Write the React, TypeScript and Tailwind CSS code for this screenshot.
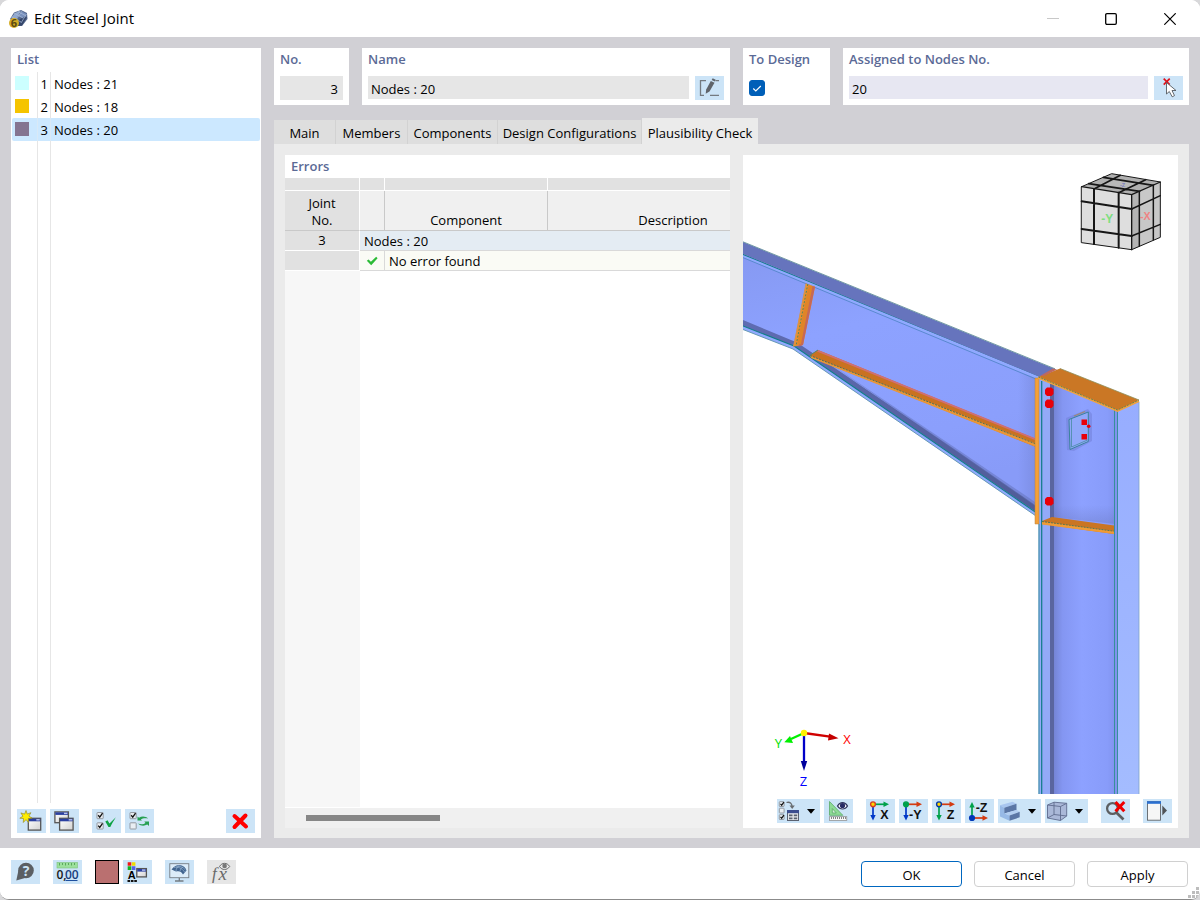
import type { ReactNode } from "react";

type Joint = { no: number; name: string; color: string };

const joints: Joint[] = [
  { no: 1, name: "Nodes : 21", color: "#ccffff" },
  { no: 2, name: "Nodes : 18", color: "#f5c400" },
  { no: 3, name: "Nodes : 20", color: "#847491" },
];

const tabs = [
  { label: "Main", width: "w-[62px]" },
  { label: "Members", width: "w-[72px]" },
  { label: "Components", width: "w-[90px]" },
  { label: "Design Configurations", width: "w-[144px]" },
  { label: "Plausibility Check", width: "w-[116px]" },
];

function ToolButton({
  label,
  children,
  menu = false,
  disabled = false,
}: {
  label: string;
  children: ReactNode;
  menu?: boolean;
  disabled?: boolean;
}) {
  return (
    <button
      type="button"
      aria-label={label}
      disabled={disabled}
      className={`flex h-6 shrink-0 items-center ${menu ? "w-[43px]" : "w-[29px]"} ${
        disabled ? "bg-[#e6e6e6]" : "bg-[#cce4f7] hover:bg-[#b8daf5]"
      }`}
    >
      <svg viewBox={menu ? "0 0 43 24" : "0 0 29 24"} className="h-6 w-full" aria-hidden="true">
        {children}
        {menu && <path d="M30 10h8l-4 4.7z" fill="#000" />}
      </svg>
    </button>
  );
}

function MiniWindow({ x, y, w, h }: { x: number; y: number; w: number; h: number }) {
  return (
    <g>
      <rect x={x + 0.6} y={y + 0.6} width={w - 1.2} height={h - 1.2} fill="url(#paper)" stroke="#555" strokeWidth="1.3" />
      <rect x={x + 1} y={y + 1} width={w - 2} height="2.6" fill="#2a3fa0" />
      <rect x={x + w - 5} y={y + 1.4} width="3.4" height="1.4" fill="#b9c4ee" />
    </g>
  );
}

function CheckSquare({ x, y, on = true, size = 6.2 }: { x: number; y: number; on?: boolean; size?: number }) {
  return (
    <g>
      <rect x={x} y={y} width={size} height={size} rx="0.6" fill="#e9eef3" stroke="#8a9097" strokeWidth="0.9" />
      {on && (
        <path
          d={`M${x + 1.2} ${y + size * 0.45}l${size * 0.25} ${size * 0.3}l${size * 0.45} ${-size * 0.65}`}
          fill="none"
          stroke="#111"
          strokeWidth="1.3"
        />
      )}
    </g>
  );
}

function Panel({ title, children, htmlFor }: { title: string; children: ReactNode; htmlFor: string }) {
  return (
    <section className="h-[57px] bg-white px-1.5 pt-[2px]">
      <label htmlFor={htmlFor} className="block h-[19px] whitespace-nowrap font-semibold leading-[19px] text-[#5b6a96]">
        {title}
      </label>
      <div className="mt-[7px] flex h-6 items-start gap-1.5">{children}</div>
    </section>
  );
}

function AxisIcon({
  label,
  right,
  vertical,
  dot,
  ring,
  up = false,
}: {
  label: string;
  right: string;
  vertical: string;
  dot: string;
  ring: string;
  up?: boolean;
}) {
  const oy = up ? 19 : 5.3;
  return (
    <g>
      <path d={`M7 ${oy}H19`} stroke={right} strokeWidth="1.7" />
      <path d={`M17.5 ${oy - 2.7}L23 ${oy}L17.5 ${oy + 2.7}z`} fill={right} />
      <path d={up ? "M7 19V7" : "M7 5.3V17"} stroke={vertical} strokeWidth="1.7" />
      <path d={up ? "M4.3 8.5L7 3l2.7 5.5z" : "M4.3 16L7 21.5L9.7 16z"} fill={vertical} />
      <circle cx="7" cy={oy} r="2.4" fill={dot} stroke={ring} strokeWidth="1.4" />
      <text
        x="22.5"
        y={up ? 13 : 20}
        textAnchor="end"
        fontSize="12.5"
        fontWeight="700"
        fill="#111"
        className="font-['Liberation_Sans',sans-serif]"
      >
        {label}
      </text>
    </g>
  );
}

function JointScene() {
  return (
    <svg
      viewBox="743 155 435 639"
      preserveAspectRatio="xMaxYMid slice"
      className="block h-full w-full"
      role="img"
      aria-label="Steel frame corner with haunch, bolts and stiffeners"
    >
      <defs>
        <linearGradient id="beamWeb" x1="0" y1="0" x2="0.3" y2="1">
          <stop offset="0" stopColor="#8699f2" />
          <stop offset="0.35" stopColor="#8da2ff" />
          <stop offset="0.8" stopColor="#8b9ffc" />
          <stop offset="1" stopColor="#889bf8" />
        </linearGradient>
        <linearGradient id="columnWeb" x1="0" y1="0" x2="1" y2="0">
          <stop offset="0" stopColor="#7382d2" />
          <stop offset="0.15" stopColor="#8496f2" />
          <stop offset="0.45" stopColor="#8da1ff" />
          <stop offset="0.85" stopColor="#889cfa" />
          <stop offset="1" stopColor="#7f91ec" />
        </linearGradient>
        <linearGradient id="flange" x1="0" y1="0" x2="0" y2="1">
          <stop offset="0" stopColor="#97adff" />
          <stop offset="1" stopColor="#a4bcff" />
        </linearGradient>
        <linearGradient id="underFlange" x1="0" y1="0" x2="1" y2="1">
          <stop offset="0" stopColor="#5f6cb2" />
          <stop offset="1" stopColor="#505c98" />
        </linearGradient>
        <linearGradient id="shade" x1="0" y1="0" x2="0" y2="1">
          <stop offset="0" stopColor="#5c68a8" stopOpacity="0" />
          <stop offset="1" stopColor="#5c68a8" stopOpacity="0.3" />
        </linearGradient>
        <linearGradient id="plateShade" x1="0" y1="0" x2="1" y2="0">
          <stop offset="0" stopColor="#6d7cc8" stopOpacity="0" />
          <stop offset="1" stopColor="#6d7cc8" stopOpacity="0.4" />
        </linearGradient>
      </defs>

      {/* beam and haunch web */}
      <path d="M743 254L1040 376V515L796 347L743 326Z" fill="url(#beamWeb)" />
      <path d="M1018 368L1036 376V510L1018 498Z" fill="url(#plateShade)" />
      <path d="M743 254L1040 376V380L743 257.5Z" fill="#90a9ff" />
      <path d="M743 254.3L1040 376.3" stroke="#0d7f87" strokeWidth="1.1" />
      <path d="M743 257.6L1036 379" stroke="#4c83c4" strokeWidth="0.8" />
      <path d="M743 242L1055 369L1040 377L743 254Z" fill="#6674bd" />
      <path d="M743 241.8L1055 368.8" stroke="#65919c" strokeWidth="0.9" />

      {/* lower flange */}
      <path d="M743 320L797 342.5L826 362L960 453L1035 505V513L793 346L743 326Z" fill="url(#underFlange)" />
      <path d="M826 361L960 451L1035 502V506L960 454Z" fill="#6170b5" opacity="0.5" />
      <path d="M743 326L794 346L1036 512V516L793 349L743 329.5Z" fill="#91aaff" />
      <path d="M743 326L794 346L1036 512.5" fill="none" stroke="#0d7f87" strokeWidth="1.1" />
      <path d="M743 329.5L793 349L1036 516" fill="none" stroke="#5b93ad" strokeWidth="0.9" />

      {/* transverse stiffener */}
      <path d="M806 283.5L815 286.7L803 345L793.3 346.5Z" fill="#ed8f2f" />
      <path d="M812 286L815 286.7L803 345L798.5 346.5Z" fill="#c66857" />
      <path d="M808.5 285L812.5 286.5L801 344L797 345Z" fill="#e08428" />
      <path d="M806 283.5L793.6 346.5" stroke="#d2954f" strokeWidth="0.9" />
      <path d="M807.8 284L796 346" stroke="#44865c" strokeWidth="0.9" strokeDasharray="2 1.5" />

      {/* haunch flange plate */}
      <path d="M810 355L818 350L1036 439V447L813 358Z" fill="#c97221" />
      <path d="M818 350L1036 438.5V440.5L817 351.5Z" fill="#d06f72" />
      <path d="M810 355.5L1036 443.5V447L811 358Z" fill="#e99638" />
      <path d="M810 355.5L1036 444" stroke="#366f63" strokeWidth="0.9" strokeDasharray="2 1.2" />
      <path d="M818 350L810 355.3" stroke="#53866c" strokeWidth="1" />

      {/* column */}
      <path d="M1038.5 378H1053V794H1038.5Z" fill="#93aaf8" />
      <path d="M1053 380L1117 408V794H1053Z" fill="url(#columnWeb)" />
      <path d="M1050 384H1054V794H1050Z" fill="#5a659f" />
      <path d="M1117 409L1139 401V794H1117Z" fill="url(#flange)" />
      <path d="M1053 505H1115V524L1053 517Z" fill="url(#shade)" />
      <path d="M1039 524V794M1114.5 410V794M1117.5 410V794" stroke="#378f9b" strokeWidth="1" />
      <path d="M1041.7 381V794" stroke="#0d7b86" strokeWidth="1.2" />
      <path d="M1139 402V794" stroke="#7fa2c7" strokeWidth="0.8" />

      {/* end plate and cap plate */}
      <path d="M1035 378H1039V524H1035Z" fill="#f4a039" stroke="#b58142" strokeWidth="0.5" />
      <path d="M1038.5 377L1060 368.5L1139 400L1117.5 411Z" fill="#ca7725" />
      <path d="M1040 376L1053 368.5L1057 369.5L1044 376Z" fill="#bd6861" />
      <path d="M1038 377.5L1117.5 411L1139 401" fill="none" stroke="#f2a13d" strokeWidth="2" />
      <path d="M1038.5 377L1117.5 410L1139 400" fill="none" stroke="#4b7c57" strokeWidth="0.8" strokeDasharray="2 1" />
      <path d="M1060 368.5L1139 400" stroke="#8f8e58" strokeWidth="0.8" />

      {/* column stiffener */}
      <path d="M1042 521L1052 517L1114 525.5V534L1042 524Z" fill="#ca7523" />
      <path d="M1042 521.5L1114 531V534L1042 524.5Z" fill="#f09b36" />
      <path d="M1042 521.5L1114 531.2" stroke="#44735c" strokeWidth="0.9" strokeDasharray="2 1" />

      {/* small connection plate */}
      <path d="M1066 418L1088 409L1092 414V441L1074 451L1067 450Z" fill="#7484dc" opacity="0.6" />
      <path d="M1069 419.5L1088.3 412V441.5L1070 449.5Z" fill="#90a8fa" stroke="#3b839c" strokeWidth="1" />
      <path d="M1071.5 419V447L1087.5 440" fill="none" stroke="#4f8eab" strokeWidth="0.9" />
      <path d="M1074 416L1085 411.5" stroke="#9b8974" strokeWidth="1.2" />

      <g fill="#e90008">
        <path d="M1047 387.5h4.5l2 2v4.5l-2 2h-4.500l-2-2v-4.500z" />
        <path d="M1047 399.5h4.5l2 2v4.5l-2 2h-4.500l-2-2v-4.500z" />
        <path d="M1047 497h4.5l2 2v4.5l-2 2h-4.500l-2-2v-4.500z" />
        <rect x="1081.5" y="419.5" width="5.5" height="5.5" />
        <rect x="1081.5" y="434" width="5.5" height="5.5" />
        <circle cx="1088.7" cy="426.3" r="1.8" />
      </g>

      {/* navigation cube */}
      <g transform="translate(1060 160) scale(0.33333)">
        <path d="M65 80L155 41L301 66L215 104Z" fill="#b0b0b0" />
        <path d="M65 80L215 104V269L65 248Z" fill="#dedede" />
        <path d="M215 104L301 66V232L215 269Z" fill="#c8c8c8" />
        <path d="M215 104L238 94V260L215 269Z" fill="#b4b4b4" />
        <path d="M133 73L176 57L236 68L194 83Z" fill="#b9b9b9" />
        <g fill="none" stroke="#161616" strokeLinecap="round" strokeLinejoin="round">
          <path d="M65 80L155 41L301 66V232L215 269L65 248Z" strokeWidth="3" />
          <path d="M102 87V252M176 98V263M65 124L215 147M65 207L215 228" strokeWidth="6" />
          <path d="M215 147L301 107M215 228L301 193M238 95V258M280 76V239" strokeWidth="4.5" />
          <path d="M102 87L181 46M176 98L257 59M86 71L239 94M130 52L280 76" strokeWidth="5" />
          <path d="M65 80L215 104L301 66M215 104V269" strokeWidth="4" />
        </g>
        <g fontWeight="700" textAnchor="middle" className="font-['Liberation_Sans',sans-serif]">
          <text x="142" y="190" fontSize="36" fill="#7ddf80">-Y</text>
          <text x="256" y="180" fontSize="32" fill="#ef8484">-X</text>
          <text x="188" y="81" fontSize="17" fill="#7e82c0">-Z</text>
        </g>
      </g>

      {/* global axes */}
      <g strokeWidth="2.3" fill="none">
        <path d="M804 733L830 736.7" stroke="#d00000" />
        <path d="M804 733L791 739" stroke="#00f000" />
        <path d="M804 733V762" stroke="#0000c8" />
      </g>
      <path d="M829 733.5L838.5 738.3L828 740.5Z" fill="#c40000" />
      <path d="M790 736L784.3 742.3L793 743Z" fill="#00f000" />
      <path d="M800.8 761H807.2L804 771Z" fill="#00009c" />
      <circle cx="804" cy="733" r="3.2" fill="#fff200" />
      <g fontSize="13" textAnchor="middle">
        <text x="847" y="744" fill="#ff0000">X</text>
        <text x="778.5" y="748" fill="#00e000">Y</text>
        <text x="803.5" y="786" fill="#0000ff">Z</text>
      </g>
    </svg>
  );
}

function TitleBar() {
  return (
    <header className="flex h-[37px] shrink-0 items-center bg-white pl-2">
      <svg viewBox="0 0 20 20" className="h-5 w-5" aria-hidden="true">
        <path d="M2 10L6 3.5L13 1L19 4L19.5 10L14 17L9 17Z" fill="#56698f" />
        <path d="M3 9L7 4L13 1.5L10 7L8 11Z" fill="#91a9d0" />
        <path d="M10 7L14 2.5L18.5 5L15 9Z" fill="#7890bc" />
        <path d="M9 12L14 9L19 8L14 16.5L10 17Z" fill="#35466a" />
        <path d="M6 4L15 9M10 2.5L18 7M4 8L13 13M8 11L14 2M13 14L18.5 5" stroke="#a9bcda" strokeWidth="0.7" />
        <circle cx="6" cy="14" r="5" fill="#d5ad26" />
        <text x="6" y="18" textAnchor="middle" fontSize="11" fontWeight="700" fill="#5c4a12">6</text>
      </svg>
      <h1 className="ml-1.5 flex-1 whitespace-nowrap pb-0.5 text-[15px] leading-5 text-black">Edit Steel Joint</h1>
      <div className="flex items-center">
        <button type="button" aria-label="Minimize" disabled className="flex h-8 w-[58px] items-center justify-center">
          <svg viewBox="0 0 12 12" className="h-3 w-3"><path d="M0 5.5h12" stroke="#c8c8c8" /></svg>
        </button>
        <button type="button" aria-label="Maximize" className="flex h-8 w-[58px] items-center justify-center">
          <svg viewBox="0 0 12 12" className="h-3 w-3"><rect x="0.7" y="0.7" width="10.6" height="10.6" rx="1.2" fill="none" stroke="#000" strokeWidth="1.3" /></svg>
        </button>
        <button type="button" aria-label="Close" className="flex h-8 w-[60px] items-center justify-center">
          <svg viewBox="0 0 12 12" className="h-3 w-3"><path d="M0.3 0.3L11.7 11.7M11.7 0.3L0.3 11.7" stroke="#000" strokeWidth="1.2" /></svg>
        </button>
      </div>
    </header>
  );
}

function JointList() {
  return (
    <aside className="flex w-[250px] shrink-0 flex-col bg-white pb-[5px]">
      <h2 className="h-6 pl-1.5 font-semibold leading-[23px] text-[#5b6a96]">List</h2>
      <ul className="px-px">
        {joints.map((joint) => {
          const selected = joint.no === 3;
          return (
            <li key={joint.no}>
              <button
                type="button"
                aria-pressed={selected}
                className={`flex h-[23px] w-full items-stretch rounded-[2px] text-left leading-6 ${selected ? "bg-[#cce8ff]" : "bg-white"}`}
              >
                <span className={`w-[26px] shrink-0 border-r pl-[3px] pt-1 ${selected ? "border-[#d9e9f6]" : "border-[#e6e6e6]"}`}>
                  <span className="block h-3.5 w-3.5" style={{ backgroundColor: joint.color }} />
                </span>
                <span className={`w-[13px] shrink-0 border-r pr-[2px] text-right ${selected ? "border-[#d9e9f6]" : "border-[#e6e6e6]"}`}>
                  {joint.no}
                </span>
                <span className="pl-[3px]">{joint.name}</span>
              </button>
            </li>
          );
        })}
      </ul>
      <div className="flex flex-1 px-px">
        <div className="w-[26px] border-r border-[#e6e6e6]" />
        <div className="w-[13px] border-r border-[#e6e6e6]" />
      </div>
      <div className="mt-1.5 flex px-1.5">
        <div className="flex gap-1">
          <ToolButton label="New joint">
            <MiniWindow x={10.7} y={8.7} w={13.6} h={13} />
            <path d="M9 1.5l1.3 3.6 3.6-1.4-2 3.4 3.2 2-3.8.4.3 4-2.6-2.9-2.7 2.9.2-4-3.7-.3 3.100-2-2-3.300 3.700 1.200z" fill="#ffee00" stroke="#958b2d" strokeWidth="0.7" />
          </ToolButton>
          <ToolButton label="Copy joint">
            <MiniWindow x={4.3} y={2.3} w={14.7} h={12} />
            <MiniWindow x={9} y={8.7} w={14.7} h={13} />
          </ToolButton>
        </div>
        <div className="ml-[13px] flex gap-1">
          <ToolButton label="Select all">
            <CheckSquare x={5} y={3.5} />
            <CheckSquare x={5} y={13.8} />
            <path d="M13.3 12.5L15.5 11.2L17.5 14.5L23.8 8.2C21.5 12 20 14.5 18.3 18H16.5Z" fill="#0fa345" />
          </ToolButton>
          <ToolButton label="Invert selection">
            <CheckSquare x={5} y={3.5} />
            <CheckSquare x={5} y={13.8} on={false} />
            <path d="M12.5 11.5V7.5L14 8.8C17 6.8 21 7.5 23 9.5C20 8.9 17.5 9.3 15.8 10.4L17 11.5Z" fill="#27a052" />
            <path d="M24 12.5V17L22.3 15.6C19 17.5 15.5 17 13 14.5C16 15.6 18.8 15.2 20.5 13.9L19.3 12.5Z" fill="#27a052" />
          </ToolButton>
        </div>
        <div className="ml-auto">
          <ToolButton label="Delete joint">
            <path d="M8.5 7L20 17.5M19.5 6.5L8.5 18" stroke="#ff0000" strokeWidth="4" strokeLinecap="round" />
          </ToolButton>
        </div>
      </div>
    </aside>
  );
}

function ErrorTable() {
  return (
    <section className="flex min-w-0 flex-col overflow-hidden bg-white">
      <h2 className="h-[23px] shrink-0 pl-1.5 font-semibold leading-[23px] text-[#5b6a96]">Errors</h2>
      <div className="overflow-hidden">
        <table className="w-[513px] min-w-full table-fixed border-separate border-spacing-0">
          <colgroup>
            <col className="w-[75px]" />
            <col className="w-[25px]" />
            <col className="w-[163px]" />
            <col />
          </colgroup>
          <thead>
            <tr className="h-[13px]">
              <td className="border-r border-b border-white bg-[#e1e1e1] p-0" />
              <td className="border-r border-b border-white bg-[#e1e1e1] p-0" />
              <td className="border-r border-b border-white bg-[#e1e1e1] p-0" />
              <td className="border-b border-white bg-[#e1e1e1] p-0" />
            </tr>
            <tr className="h-10 leading-[17px]">
              <th scope="col" className="border-r border-b border-r-white border-b-[#c9c9c9] bg-[#e1e1e1] p-0 pb-px align-bottom font-normal">
                Joint
                <br />
                No.
              </th>
              <td className="border-r border-b border-[#c9c9c9] bg-[#f0f0f0] p-0" />
              <th scope="col" className="border-r border-b border-[#c9c9c9] bg-[#f0f0f0] p-0 pb-px align-bottom font-normal">Component</th>
              <th scope="col" className="border-b border-[#c9c9c9] bg-[#f0f0f0] p-0 pb-px align-bottom font-normal">Description</th>
            </tr>
          </thead>
          <tbody>
            <tr className="h-5 leading-[17px]">
              <th scope="row" className="border-r border-b border-white bg-[#e1e1e1] p-0 font-normal">3</th>
              <td colSpan={3} className="border-b border-[#d9d9d9] bg-[#e4ecf3] p-0 pt-0.5 pl-1">Nodes : 20</td>
            </tr>
            <tr className="h-5 leading-[17px]">
              <td className="border-r border-b border-white bg-[#e1e1e1] p-0" />
              <td className="border-r border-b border-[#d9d9d9] bg-[#fafbf5] p-0">
                <svg viewBox="0 0 12 12" className="mx-auto h-3 w-3" role="img" aria-label="Passed">
                  <path d="M0.8 5.8L2.6 4.6L4.9 6.8L10.2 1.8L11.6 3.2L5.2 10.2Z" fill="#2bbb36" />
                </svg>
              </td>
              <td colSpan={2} className="border-b border-[#d9d9d9] bg-[#fafbf5] p-0 pt-0.5 pl-1">No error found</td>
            </tr>
          </tbody>
        </table>
      </div>
      <div className="w-[75px] flex-1 bg-[#f7f7f7]" />
      <div className="mt-px flex h-5 shrink-0 items-center bg-[#f0f0f0] px-[21px]">
        <div className="h-1.5 w-1/3 bg-[#868686]" />
      </div>
    </section>
  );
}

function Viewer() {
  return (
    <section className="flex min-w-0 flex-col bg-white">
      <div className="min-h-0 flex-1 basis-0 overflow-hidden">
        <JointScene />
      </div>
      <div className="mt-[5px] mb-[5px] flex justify-end gap-[13px] pr-1.5">
        <div className="flex gap-1">
          <ToolButton label="Display options" menu>
            <CheckSquare x={2.3} y={2.7} size={4.8} />
            <CheckSquare x={2.3} y={9.2} size={4.8} on={false} />
            <CheckSquare x={2.3} y={15.7} size={4.8} />
            <path d="M9.5 3.5C13 2.5 15 4.5 15 7.5" fill="none" stroke="#686c70" strokeWidth="1.3" />
            <path d="M12.5 6.5H17.8L15.2 10Z" fill="#686c70" />
            <rect x="10.5" y="11.5" width="11" height="10" fill="#e4e6ea" stroke="#5b6270" />
            <rect x="10" y="11" width="12" height="3.2" fill="#3b4c8e" />
            <path d="M12 15.5h3.5v1.7H12zM16.8 15.5h3.4v1.7h-3.400zM12 18.5h3.5v1.7H12zM16.8 18.5h3.4v1.7h-3.400z" fill="#59616f" />
          </ToolButton>
          <ToolButton label="Show dimensions">
            <path d="M5.5 2.5V16.3H18.8Z" fill="#8edb96" stroke="#5caa68" strokeWidth="0.8" />
            <path d="M8.3 9.5V14H12.3Z" fill="#d3eedb" stroke="#5caa68" strokeWidth="0.8" />
            <rect x="5.5" y="17.7" width="17.3" height="3.8" fill="#f8f8f8" stroke="#888" strokeWidth="0.7" />
            <path d="M7.5 18v2M9.5 18v2M11.5 18v2M13.5 18v2M15.5 18v2M17.5 18v2M19.5 18v2M21.5 18v2" stroke="#555" strokeWidth="0.7" />
            <path d="M13.5 7C16 2.6 21 2.6 23.5 7C21 11 16 11 13.5 7Z" fill="#fff" stroke="#2f335d" strokeWidth="1.2" />
            <circle cx="18.5" cy="6.5" r="2.6" fill="#272b64" />
          </ToolButton>
        </div>
        <div className="flex gap-1">
          <ToolButton label="View in X">
            <AxisIcon label="X" right="#00a14b" vertical="#0038c8" dot="#ffd600" ring="#d8401f" />
          </ToolButton>
          <ToolButton label="View against Y">
            <AxisIcon label="-Y" right="#d43b12" vertical="#0038c8" dot="#00a14b" ring="#00a14b" />
          </ToolButton>
          <ToolButton label="View in Z">
            <AxisIcon label="Z" right="#d43b12" vertical="#00a14b" dot="#ffd600" ring="#0038a8" />
          </ToolButton>
          <ToolButton label="View against Z">
            <AxisIcon label="-Z" right="#d43b12" vertical="#00a14b" dot="#0038b8" ring="#0038b8" up />
          </ToolButton>
          <ToolButton label="Rendering mode" menu>
            <path d="M2 6.3L14.5 2.7L18.5 4.7L6.3 8.8Z" fill="#a9c6ef" />
            <path d="M2 6.3L6.3 8.8V14.3L11.5 16.5V21.8L2 17.5Z" fill="#97b9e6" />
            <path d="M6.3 8.8L18.5 4.7V11L6.3 14.5Z" fill="#5b76a5" />
            <path d="M6.3 14.5L18.5 11L21.7 12.5L11.5 16.5Z" fill="#b3cef1" />
            <path d="M11.5 16.5L21.7 12.8V18.3L11.5 21.8Z" fill="#5b76a5" />
          </ToolButton>
          <ToolButton label="Projection mode" menu>
            <path d="M2.5 6L9 3.2L21.7 4.3V17L15.5 21.5L2.5 19Z" fill="#aab8d8" />
            <path d="M2.5 6L9 3.2L21.7 4.3V17L15.5 21.5L2.5 19ZM2.5 6L15.5 7.5L21.7 4.3M15.5 7.5V21.5M9 3.2V15.5L21.7 17M9 15.5L2.5 19" fill="none" stroke="#5f6b8d" strokeWidth="0.9" />
          </ToolButton>
        </div>
        <ToolButton label="Reset zoom">
          <circle cx="11.5" cy="9.5" r="5.4" fill="none" stroke="#5c5f62" strokeWidth="2.3" />
          <path d="M15.3 13.5L22.5 20.5" stroke="#5c5f62" strokeWidth="2.7" />
          <path d="M14.5 3L23.3 12.3M23.3 3L14.5 12.3" stroke="#f00000" strokeWidth="3" />
        </ToolButton>
        <ToolButton label="Toggle side panel">
          <rect x="4.5" y="2.7" width="13" height="18.5" fill="#f6f6f6" stroke="#606468" strokeWidth="0.9" />
          <rect x="4" y="2.2" width="14" height="2.6" fill="#2a6fd0" />
          <path d="M19.3 6.5L24 11.5L19.3 16.5Z" fill="#505458" />
        </ToolButton>
      </div>
    </section>
  );
}

function Footer() {
  return (
    <footer className="flex h-[51px] shrink-0 items-start bg-white pt-3 pr-3 pl-[11px]">
      <div className="flex gap-[13px]">
        <ToolButton label="Help">
          <circle cx="15" cy="10.5" r="7.8" fill="#5b5f63" />
          <path d="M7.5 10L5.3 20.5L14 18Z" fill="#5b5f63" />
          <text x="15" y="15.5" textAnchor="middle" fontSize="14" fontWeight="700" fill="#cce4f7">?</text>
        </ToolButton>
        <ToolButton label="Units and decimal places">
          <rect x="4" y="2.5" width="20.5" height="5.5" fill="#9ce09c" stroke="#7cc47c" strokeWidth="0.6" />
          <path d="M6.5 3v2.5M9.5 3v2M12.5 3v2.5M15.5 3v2M18.5 3v2.5M21.5 3v2" stroke="#4a9a4d" strokeWidth="0.8" />
          <text x="3.5" y="18.5" fontSize="12" fontWeight="600" fill="#181818">0,</text>
          <text x="12" y="18.5" fontSize="12" fontWeight="600" fill="#163d7c">00</text>
          <path d="M12.5 20.5h12" stroke="#1d4f9e" strokeWidth="1.1" />
        </ToolButton>
        <div className="flex gap-1">
          <button type="button" aria-label="Color" className="h-6 w-6 border border-black bg-[#ba7070]" />
          <ToolButton label="Display properties">
            <path d="M4.7 2.2h3.6v3.6H4.7z" fill="#f01818" />
            <path d="M8.8 2.2h3.6v3.6H8.8z" fill="#eedc00" />
            <path d="M4.7 6.3h3.6v3.6H4.7z" fill="#12b31e" />
            <path d="M8.8 6.3h3.6v3.6H8.8z" fill="#5360e8" />
            <text x="8.7" y="19" textAnchor="middle" fontSize="11" fontWeight="700" fill="#000" className="font-['Liberation_Sans',sans-serif]">A</text>
            <path d="M4.5 21h9.5" stroke="#111" strokeWidth="1.8" strokeDasharray="2.6 0.8" />
            <MiniWindow x={13.2} y={8} w={10.8} h={9.5} />
          </ToolButton>
        </div>
        <ToolButton label="Graphics settings">
          <rect x="4.8" y="3.7" width="19" height="14" fill="#dcecf9" stroke="#747c84" strokeWidth="0.9" />
          <path d="M14.3 18v2.5M10 21h8.5" stroke="#747c84" strokeWidth="1.3" />
          <path d="M6.5 9.5C9 6.5 11 5.2 14 5C18 5.3 20.5 7.2 21.5 10.5L18 14.5C16.5 11.7 14.5 10.5 11 11.5Z" fill="#41648f" />
          <path d="M9 7.5C13 6.5 17 8 19.8 12.3M11 6C15 6 18 7 20.5 10M11 11C11 9 12.5 6.5 14.5 5.2M15 11C15.5 9 17 7 18.5 6.5" fill="none" stroke="#a9c5df" strokeWidth="0.6" />
        </ToolButton>
        <ToolButton label="Formula preview" disabled>
          <text x="5" y="18.5" fontSize="17" fontStyle="italic" fill="#696969" className="font-['Liberation_Serif',serif]">f</text>
          <text x="11.5" y="19.5" fontSize="19" fontStyle="italic" fill="#696969" className="font-['Liberation_Serif',serif]">x</text>
          <path d="M12.5 6.5C15 2.3 20 2.3 22.7 6.5C20 10.5 15 10.5 12.5 6.5Z" fill="#e6e6e6" stroke="#696969" />
          <circle cx="17.6" cy="6" r="2.3" fill="#777" />
        </ToolButton>
      </div>
      <div className="mt-px ml-auto flex gap-3">
        <button type="button" className="h-[26px] w-[101px] rounded-[4px] border border-[#0067c0] bg-white pt-1">OK</button>
        <button type="button" className="h-[26px] w-[101px] rounded-[4px] border border-[#d0d0d0] bg-white pt-1">Cancel</button>
        <button type="button" className="h-[26px] w-[101px] rounded-[4px] border border-[#d0d0d0] bg-white pt-1">Apply</button>
      </div>
    </footer>
  );
}

export default function App() {
  return (
    <div className="h-screen min-h-[600px] bg-[#d8d8da] font-['Open_Sans','Noto_Sans',sans-serif] text-[13px] text-black">
      <div className="relative flex h-full flex-col overflow-hidden rounded-[9px] border-b border-[#8b8b8b] bg-white">
        <svg width="0" height="0" className="absolute" aria-hidden="true">
          <defs>
            <linearGradient id="paper" x1="0" y1="0" x2="1" y2="1">
              <stop offset="0" stopColor="#fff" />
              <stop offset="1" stopColor="#d2d2d2" />
            </linearGradient>
          </defs>
        </svg>
        <TitleBar />
        <main className="flex min-h-0 flex-1 gap-[13px] bg-[#d1d0d5] px-[11px] pt-[11px] pb-2.5">
          <JointList />
          <div className="flex min-w-0 flex-1 flex-col">
            <div className="grid grid-cols-[75px_368fr_87px_346fr] gap-[13px]">
              <Panel title="No." htmlFor="joint-no">
                <input id="joint-no" readOnly defaultValue="3" className="h-6 w-full min-w-0 bg-[#e6e6e6] pt-0.5 pr-[5px] text-right outline-none" />
              </Panel>
              <Panel title="Name" htmlFor="joint-name">
                <input id="joint-name" readOnly defaultValue="Nodes : 20" className="h-[23px] min-w-0 flex-1 bg-[#e6e6e6] px-[3px] pt-[3px] outline-none" />
                <ToolButton label="Edit name">
                  <path d="M11 4.7H5.5V19.3H9M20.5 4.7H24M15 19.3H24" fill="none" stroke="#747a80" strokeWidth="1.3" />
                  <path d="M10.7 17.8L11.2 13.5L15.8 5L19.5 6.7L14.5 15.5Z" fill="#60646a" />
                  <path d="M16.7 4L17.7 2.3L20.7 3.7L19.9 5.6Z" fill="#60646a" />
                </ToolButton>
              </Panel>
              <Panel title="To Design" htmlFor="to-design">
                <span className="relative mt-1 h-4 w-4">
                  <input id="to-design" type="checkbox" defaultChecked className="peer block h-4 w-4 appearance-none rounded-[3px] border border-[#005fb8] checked:bg-[#005fb8]" />
                  <svg viewBox="0 0 16 16" className="pointer-events-none absolute inset-0 hidden h-4 w-4 peer-checked:block" aria-hidden="true">
                    <path d="M4.3 8.5L6.8 11L11.8 6" fill="none" stroke="#fff" strokeWidth="1.1" />
                  </svg>
                </span>
              </Panel>
              <Panel title="Assigned to Nodes No." htmlFor="assigned">
                <input id="assigned" defaultValue="20" className="h-[23px] min-w-0 flex-1 bg-[#e7e7f2] px-[3px] pt-[3px] outline-none" />
                <ToolButton label="Select nodes">
                  <path d="M9.7 2.7L15.7 8.7M15.7 2.7L9.7 8.7" stroke="#e0121a" strokeWidth="1.7" />
                  <path d="M12.5 6.5V18L15.3 15.5L18.2 20.8L20.5 19.6L18 14.5H22Z" fill="#fff" stroke="#555a60" strokeWidth="0.9" />
                </ToolButton>
              </Panel>
            </div>
            <div role="tablist" className="mt-[13px] flex h-[26px] items-end">
              {tabs.map((tab) => {
                const active = tab.label === "Plausibility Check";
                return (
                  <button
                    key={tab.label}
                    type="button"
                    role="tab"
                    aria-selected={active}
                    className={`shrink-0 whitespace-nowrap ${tab.width} ${
                      active
                        ? "h-[26px] bg-[#ebebeb] pt-1.5"
                        : "h-6 border-r border-[#d2d2d2] bg-[#dedede] pt-1"
                    }`}
                  >
                    {tab.label}
                  </button>
                );
              })}
            </div>
            <div className="grid min-h-0 flex-1 grid-cols-[445fr_435fr] gap-[13px] bg-[#ebebeb] px-[11px] pt-[11px] pb-2.5">
              <ErrorTable />
              <Viewer />
            </div>
          </div>
        </main>
        <Footer />
        <svg viewBox="0 0 11 11" className="absolute right-px bottom-px h-[11px] w-[11px]" aria-hidden="true">
          <path d="M8 0h3v3H8zM4 4h3v3H4zM8 4h3v3H8zM0 8h3v3H0zM4 8h3v3H4zM8 8h3v3H8z" fill="#bdbdbd" />
        </svg>
      </div>
    </div>
  );
}
